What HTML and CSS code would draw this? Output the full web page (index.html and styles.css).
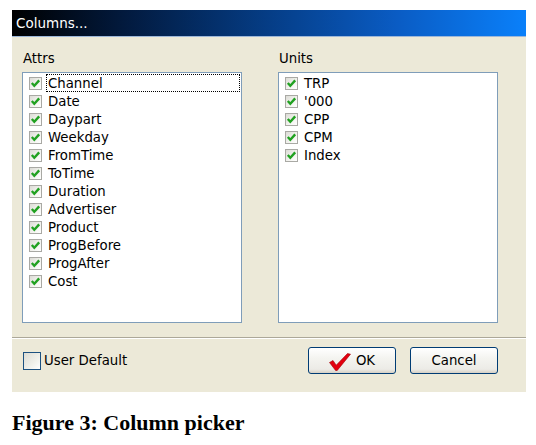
FILE: index.html
```html
<!DOCTYPE html>
<html>
<head>
<meta charset="utf-8">
<link rel="stylesheet" href="styles.css">
</head>
<body>
<div class="dialog">
  <div class="titlebar">Columns...</div>
  <div class="panes">
    <div class="pane">
      <div class="pane-label">Attrs</div>
      <div class="listbox">
        <div class="row"><span class="cb"><svg width="13" height="13" viewBox="0 0 13 13"><path d="M2.8 6 L5.3 8.7 L10.2 3.4" fill="none" stroke="#21a121" stroke-width="2.4"/></svg></span><span class="txt focus">Channel</span></div>
        <div class="row"><span class="cb"><svg width="13" height="13" viewBox="0 0 13 13"><path d="M2.8 6 L5.3 8.7 L10.2 3.4" fill="none" stroke="#21a121" stroke-width="2.4"/></svg></span><span class="txt">Date</span></div>
        <div class="row"><span class="cb"><svg width="13" height="13" viewBox="0 0 13 13"><path d="M2.8 6 L5.3 8.7 L10.2 3.4" fill="none" stroke="#21a121" stroke-width="2.4"/></svg></span><span class="txt">Daypart</span></div>
        <div class="row"><span class="cb"><svg width="13" height="13" viewBox="0 0 13 13"><path d="M2.8 6 L5.3 8.7 L10.2 3.4" fill="none" stroke="#21a121" stroke-width="2.4"/></svg></span><span class="txt">Weekday</span></div>
        <div class="row"><span class="cb"><svg width="13" height="13" viewBox="0 0 13 13"><path d="M2.8 6 L5.3 8.7 L10.2 3.4" fill="none" stroke="#21a121" stroke-width="2.4"/></svg></span><span class="txt">FromTime</span></div>
        <div class="row"><span class="cb"><svg width="13" height="13" viewBox="0 0 13 13"><path d="M2.8 6 L5.3 8.7 L10.2 3.4" fill="none" stroke="#21a121" stroke-width="2.4"/></svg></span><span class="txt">ToTime</span></div>
        <div class="row"><span class="cb"><svg width="13" height="13" viewBox="0 0 13 13"><path d="M2.8 6 L5.3 8.7 L10.2 3.4" fill="none" stroke="#21a121" stroke-width="2.4"/></svg></span><span class="txt">Duration</span></div>
        <div class="row"><span class="cb"><svg width="13" height="13" viewBox="0 0 13 13"><path d="M2.8 6 L5.3 8.7 L10.2 3.4" fill="none" stroke="#21a121" stroke-width="2.4"/></svg></span><span class="txt">Advertiser</span></div>
        <div class="row"><span class="cb"><svg width="13" height="13" viewBox="0 0 13 13"><path d="M2.8 6 L5.3 8.7 L10.2 3.4" fill="none" stroke="#21a121" stroke-width="2.4"/></svg></span><span class="txt">Product</span></div>
        <div class="row"><span class="cb"><svg width="13" height="13" viewBox="0 0 13 13"><path d="M2.8 6 L5.3 8.7 L10.2 3.4" fill="none" stroke="#21a121" stroke-width="2.4"/></svg></span><span class="txt">ProgBefore</span></div>
        <div class="row"><span class="cb"><svg width="13" height="13" viewBox="0 0 13 13"><path d="M2.8 6 L5.3 8.7 L10.2 3.4" fill="none" stroke="#21a121" stroke-width="2.4"/></svg></span><span class="txt">ProgAfter</span></div>
        <div class="row"><span class="cb"><svg width="13" height="13" viewBox="0 0 13 13"><path d="M2.8 6 L5.3 8.7 L10.2 3.4" fill="none" stroke="#21a121" stroke-width="2.4"/></svg></span><span class="txt">Cost</span></div>
      </div>
    </div>
    <div class="pane">
      <div class="pane-label">Units</div>
      <div class="listbox">
        <div class="row"><span class="cb"><svg width="13" height="13" viewBox="0 0 13 13"><path d="M2.8 6 L5.3 8.7 L10.2 3.4" fill="none" stroke="#21a121" stroke-width="2.4"/></svg></span><span class="txt">TRP</span></div>
        <div class="row"><span class="cb"><svg width="13" height="13" viewBox="0 0 13 13"><path d="M2.8 6 L5.3 8.7 L10.2 3.4" fill="none" stroke="#21a121" stroke-width="2.4"/></svg></span><span class="txt">'000</span></div>
        <div class="row"><span class="cb"><svg width="13" height="13" viewBox="0 0 13 13"><path d="M2.8 6 L5.3 8.7 L10.2 3.4" fill="none" stroke="#21a121" stroke-width="2.4"/></svg></span><span class="txt">CPP</span></div>
        <div class="row"><span class="cb"><svg width="13" height="13" viewBox="0 0 13 13"><path d="M2.8 6 L5.3 8.7 L10.2 3.4" fill="none" stroke="#21a121" stroke-width="2.4"/></svg></span><span class="txt">CPM</span></div>
        <div class="row"><span class="cb"><svg width="13" height="13" viewBox="0 0 13 13"><path d="M2.8 6 L5.3 8.7 L10.2 3.4" fill="none" stroke="#21a121" stroke-width="2.4"/></svg></span><span class="txt">Index</span></div>
      </div>
    </div>
  </div>
  <div class="separator"></div>
  <div class="footer">
    <label class="userdef"><span class="bigcb"></span><span>User Default</span></label>
    <div class="buttons">
      <button class="btn"><svg class="okcheck" width="22" height="18" viewBox="0 0 22 18"><path d="M0.5 9.5 L4 7.5 L7.2 12.2 L18.5 0.5 L21.5 1.2 L8.2 17.5 L6.6 17.5 Z" fill="#e3000f" stroke="#a00008" stroke-width="0.6"/></svg><span>OK</span></button>
      <button class="btn"><span>Cancel</span></button>
    </div>
  </div>
</div>
<div class="caption">Figure 3: Column picker</div>
</body>
</html>
```

FILE: styles.css
```css
html, body {
  margin: 0;
  padding: 0;
  background: #ffffff;
}

body {
  padding: 10px 0 0 12px;
  font-family: "DejaVu Sans", Verdana, sans-serif;
  font-size: 13.3px;
  color: #000;
}

.dialog {
  width: 514px;
  height: 382px;
  background: #ece9d8;
  display: flex;
  flex-direction: column;
}

.titlebar {
  height: 27px;
  line-height: 27px;
  padding-left: 4px;
  color: #ffffff;
  font-size: 13.5px;
  background: linear-gradient(to right, #000000 0%, #021a3e 22%, #053d86 50%, #0a5cc4 75%, #0a80fa 100%);
  border-bottom: 1px solid #9db7d8;
  box-sizing: border-box;
}

.panes {
  display: flex;
  gap: 36px;
  padding: 14px 0 0 10px;
}

.pane {
  display: flex;
  flex-direction: column;
  width: 220px;
}

.pane-label {
  height: 16px;
  line-height: 16px;
  margin-bottom: 5px;
  padding-left: 1px;
}

.listbox {
  height: 251px;
  box-sizing: border-box;
  border: 1px solid #7f9db9;
  background: #ffffff;
  padding: 1px 1px 0 6px;
}

.row {
  display: flex;
  align-items: center;
  height: 18px;
}

.cb {
  width: 13px;
  height: 13px;
  box-sizing: border-box;
  border: 1px solid #a9a9a4;
  background: linear-gradient(135deg, #dcdcd6 0%, #f4f4f0 60%, #ffffff 100%);
  display: flex;
  flex: none;
  position: relative;
}

.cb svg {
  position: absolute;
  left: -1px;
  top: -1px;
}

.txt {
  margin-left: 4px;
  padding-left: 2px;
  height: 18px;
  line-height: 19px;
  flex: 1;
  box-sizing: border-box;
}

.focus {
  outline: 1px dotted #000;
  outline-offset: -1px;
}

.separator {
  margin-top: 14px;
  height: 1px;
  background: #aca899;
  border-bottom: 1px solid #ffffff;
}

.footer {
  display: flex;
  align-items: center;
  padding: 8px 28px 0 11px;
}

.userdef {
  display: flex;
  align-items: center;
  gap: 3px;
}

.bigcb {
  width: 18px;
  height: 18px;
  box-sizing: border-box;
  border: 1px solid #1c5180;
  background: linear-gradient(135deg, #dcdcd4 0%, #f0f0ea 60%, #ffffff 100%);
}

.buttons {
  margin-left: auto;
  display: flex;
  gap: 14px;
}

.btn {
  width: 88px;
  height: 27px;
  box-sizing: border-box;
  border: 1px solid #003c74;
  border-radius: 3px;
  background: linear-gradient(#ffffff 0%, #f4f4f0 40%, #ecebe6 85%, #d6d0c5 100%);
  font-family: "DejaVu Sans", Verdana, sans-serif;
  font-size: 13.3px;
  color: #000;
  display: flex;
  align-items: center;
  justify-content: center;
  gap: 5px;
  padding: 0;
}

.okcheck {
  margin-top: 2px;
}

.caption {
  margin-top: 18px;
  font-family: "Liberation Serif", "Times New Roman", serif;
  font-weight: bold;
  font-size: 22px;
  line-height: 26px;
}
```
